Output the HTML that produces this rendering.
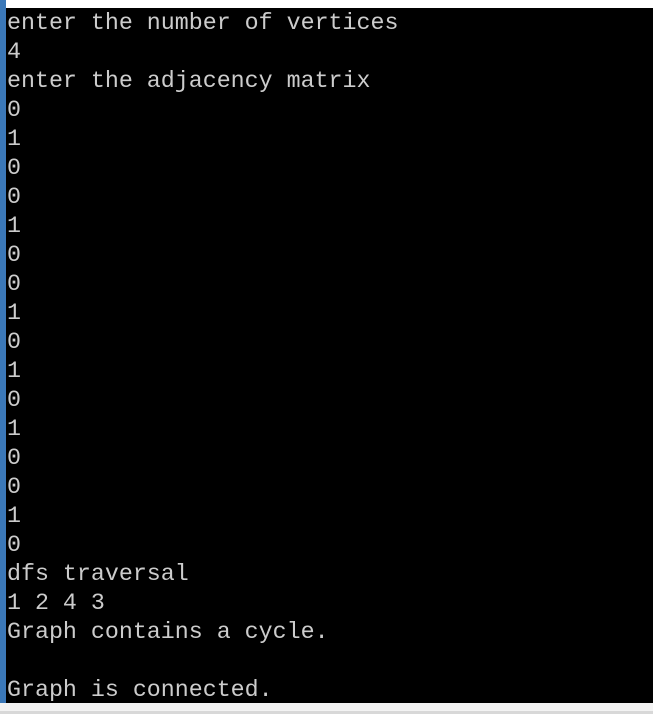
<!DOCTYPE html>
<html><head><style>
html,body{margin:0;padding:0;width:653px;height:714px;overflow:hidden;background:#f3f3f3;}
#blue{position:absolute;left:0;top:0;width:6px;height:703px;background:#3b78b8;}
#topw{position:absolute;left:6px;top:0;width:647px;height:8px;background:#fff;}
#term{position:absolute;left:6px;top:8px;width:647px;height:695px;background:#000;}
pre{position:absolute;left:7px;top:9px;margin:0;font-family:"Liberation Mono",monospace;font-size:23.3px;line-height:29px;color:#cccccc;}
#bot{position:absolute;left:0;top:711px;width:653px;height:3px;background:#d8d8d8;}
</style></head><body>
<div id="topw"></div><div id="term"></div><div id="blue"></div><div id="bot"></div>
<pre>enter the number of vertices
4
enter the adjacency matrix
0
1
0
0
1
0
0
1
0
1
0
1
0
0
1
0
dfs traversal
1 2 4 3
Graph contains a cycle.

Graph is connected.</pre>
</body></html>
